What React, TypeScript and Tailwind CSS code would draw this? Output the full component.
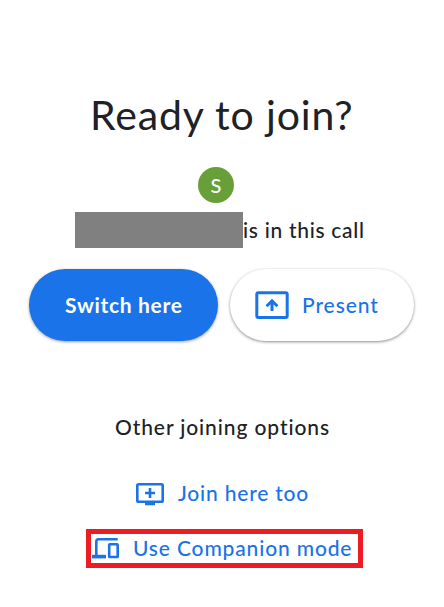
const PresentIcon = () => (
  <svg className="h-7 w-[34px] shrink-0" viewBox="0 0 34 28" fill="none" stroke="#1a73e8">
    <rect x="1.8" y="1.8" width="30.4" height="24.6" rx="1.5" strokeWidth="3" />
    <path d="M17 20V10.500M11.600 15.200L17 9.800l5.400 5.400" strokeWidth="3" />
  </svg>
);

const AddScreenIcon = () => (
  <svg className="h-[23px] w-7 shrink-0" viewBox="0 0 28 23">
    <rect x="1.3" y="1.3" width="25.4" height="17.4" rx="1.3" fill="none" stroke="#1a73e8" strokeWidth="2.6" />
    <path d="M9 19h10v3.200H9zM12.700 5h2.600v3.700H19v2.600h-3.700V15h-2.600v-3.700H9V8.700h3.700z" fill="#1a73e8" />
  </svg>
);

const DevicesIcon = () => (
  <svg className="h-[21px] w-7 shrink-0" viewBox="0 0 28 21" fill="none" stroke="#1a73e8">
    <path d="M4.300 17V3.500q0-2.200 2.200-2.200H25.700" strokeWidth="2.600" />
    <path d="M0 18.600h14" strokeWidth="3.600" />
    <rect x="17.200" y="6.300" width="8.500" height="12.700" rx=".6" strokeWidth="2.600" />
  </svg>
);

export default function App() {
  return (
    <main className="h-[607px] w-[444px] overflow-hidden bg-white pt-[90px] font-['Lato',sans-serif] text-[21px] font-medium whitespace-nowrap text-[#202124]">
      <h1 className="h-[50px] pl-[90px] text-[41px] leading-[50px] font-normal tracking-[0.85px]">Ready to join?</h1>
      <div className="mt-[27px] ml-[198px] flex size-9 items-center justify-center rounded-full bg-[#689f38] text-[20px] text-white">
        S
      </div>
      <div className="mt-[9px] ml-[75px] flex h-9 items-center">
        <div className="h-9 w-[168px] bg-[#808080]" />
        <span className="pb-px tracking-[0.7px]">is in this call</span>
      </div>
      <div className="mt-[21px] ml-[29px] flex gap-3">
        <button className="h-[72px] w-[189px] rounded-full bg-[#1a73e8] pl-9 text-left font-bold tracking-[0.7px] text-white shadow-[0_1px_3px_rgba(60,64,67,0.5)]">
          Switch here
        </button>
        <button className="flex h-[72px] w-[184px] items-center gap-[13px] rounded-full bg-white pl-[25px] tracking-[0.9px] text-[#1a73e8] shadow-[0_1px_3px_rgba(60,64,67,0.6)]">
          <PresentIcon />
          <span className="pb-px">Present</span>
        </button>
      </div>
      <p className="mt-[70px] pl-[115px] leading-8 tracking-[0.9px]">Other joining options</p>
      <button className="mt-[35px] ml-[136px] flex h-8 items-center gap-[14px] tracking-[0.8px] text-[#1a73e8]">
        <AddScreenIcon />
        <span className="pb-0.5">Join here too</span>
      </button>
      <button className="mt-[19px] ml-[86px] flex h-[39px] w-[277px] items-center gap-[13px] border-5 border-[#ed1c24] pl-px tracking-[0.85px] text-[#1a73e8]">
        <DevicesIcon />
        <span className="pb-0.5">Use Companion mode</span>
      </button>
    </main>
  );
}
